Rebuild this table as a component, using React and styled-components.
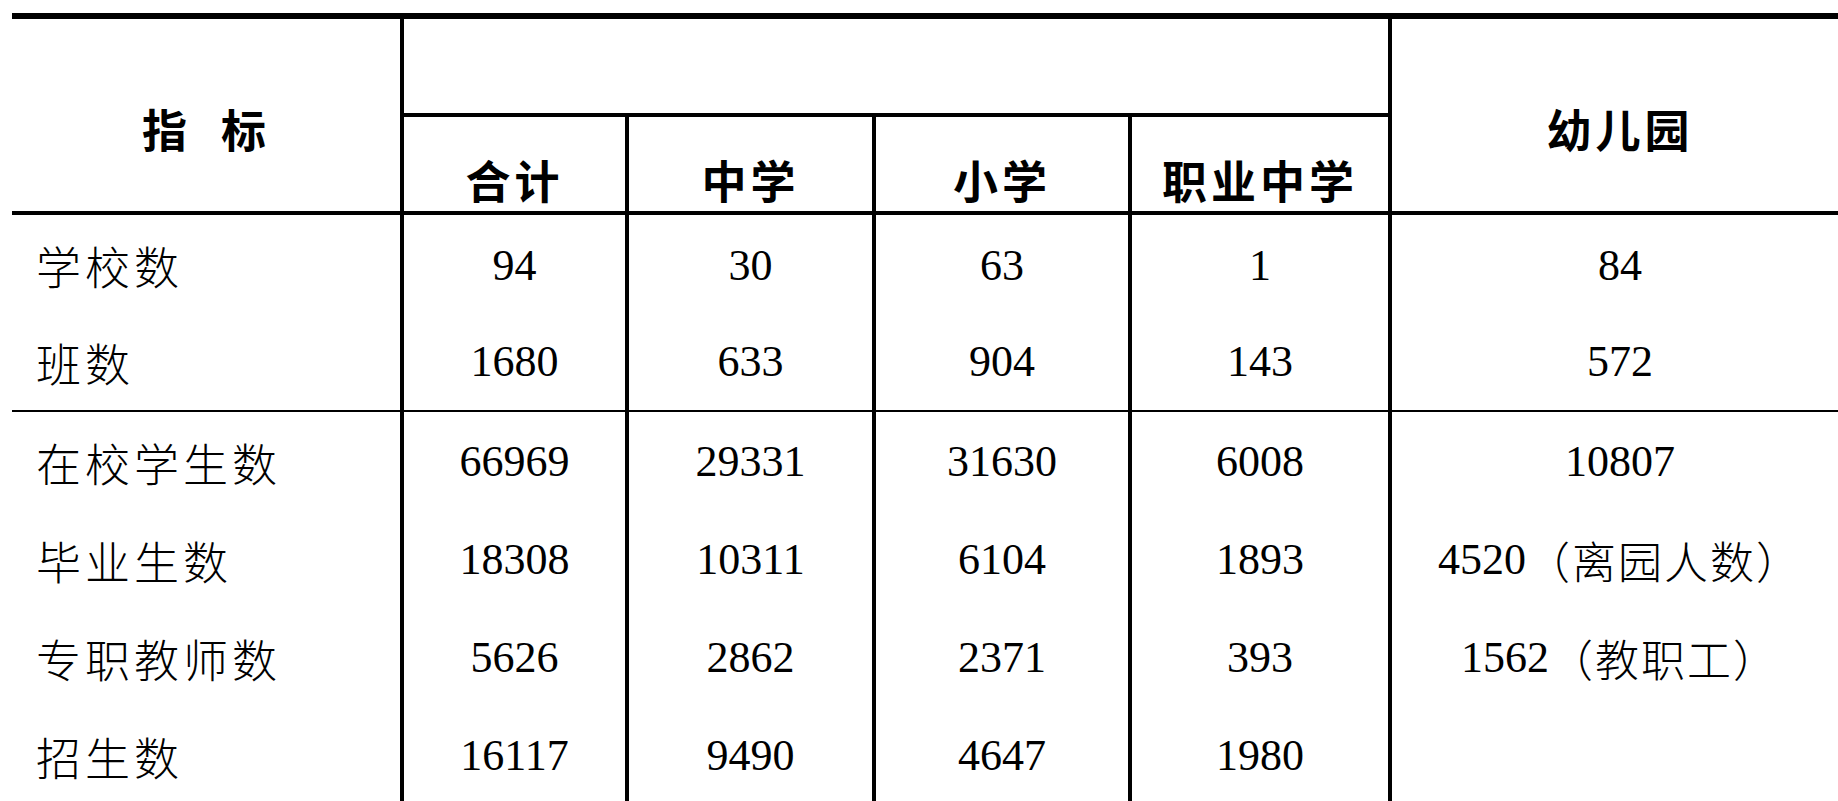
import React from 'react';
import styled, { createGlobalStyle } from 'styled-components';

const Global = createGlobalStyle`
  html, body { margin: 0; padding: 0; background: #fff; overflow: hidden; }
  body { font-family: "Liberation Serif", "Noto Sans CJK SC", serif; color: #000; }
`;

const Page = styled.div`
  box-sizing: border-box;
  width: 1838px;
  height: 801px;
  padding: 13px 0 0 12px;
  overflow: hidden;
`;

const Grid = styled.div`
  display: grid;
  grid-template-columns: 388px 225px 247px 256px 260px 460px;
  grid-template-rows: 98px 98px 97px 100px 98px 98px 98px 98px;
  border-top: 6px solid #000;
  width: max-content;
`;

const Cell = styled.div`
  box-sizing: border-box;
  display: flex;
  align-items: center;
  justify-content: ${(p) => (p.$left ? 'flex-start' : 'center')};
  grid-row: span ${(p) => p.$rowSpan || 1};
  grid-column: span ${(p) => p.$colSpan || 1};
  border-left: ${(p) => (p.$first ? 'none' : '4px solid #000')};
  border-bottom: ${(p) => (p.$bottom ? `${p.$bottom}px solid #000` : 'none')};
  padding-left: ${(p) => (p.$left ? '24px' : '0')};
  padding-top: ${(p) => p.$shift || 0}px;
  white-space: nowrap;
`;

const HeadText = styled.span`
  font-family: "Noto Sans CJK SC", sans-serif;
  font-weight: 700;
  font-size: 45px;
  letter-spacing: 4px;
  word-spacing: 16px;
  line-height: 1;
`;

const Label = styled.span`
  font-family: "Noto Sans CJK SC", sans-serif;
  font-weight: 300;
  font-size: 45px;
  letter-spacing: 4px;
  line-height: 1;
`;

const Num = styled.span`
  font-family: "Liberation Serif", serif;
  font-size: 44px;
  line-height: 1;
`;

const Note = styled.span`
  font-family: "Noto Sans CJK SC", sans-serif;
  font-weight: 300;
  font-size: 44px;
  letter-spacing: 2px;
`;

const groups = [
  [
    ['学校数', '94', '30', '63', '1', ['84']],
    ['班数', '1680', '633', '904', '143', ['572']],
  ],
  [
    ['在校学生数', '66969', '29331', '31630', '6008', ['10807']],
    ['毕业生数', '18308', '10311', '6104', '1893', ['4520', '（离园人数）']],
    ['专职教师数', '5626', '2862', '2371', '393', ['1562', '（教职工）']],
    ['招生数', '16117', '9490', '4647', '1980', ['']],
  ],
];

export default function App() {
  return (
    <>
      <Global />
      <Page>
        <Grid>
          <Cell $first $rowSpan={2} $bottom={4} $shift={26}>
            <HeadText>指 标</HeadText>
          </Cell>
          <Cell $colSpan={4} $bottom={4} />
          <Cell $rowSpan={2} $bottom={4} $shift={26}>
            <HeadText>幼儿园</HeadText>
          </Cell>
          {['合计', '中学', '小学', '职业中学'].map((t) => (
            <Cell key={t} $bottom={4} $shift={30}>
              <HeadText>{t}</HeadText>
            </Cell>
          ))}
          {groups.map((rows, gi) =>
            rows.map((r, ri) => {
              const bottom = gi === 0 && ri === rows.length - 1 ? 2 : 0;
              const shift = gi === 0 ? (ri === 0 ? 4 : 2) : 2;
              return (
                <React.Fragment key={r[0]}>
                  <Cell $first $left $bottom={bottom} $shift={shift}>
                    <Label>{r[0]}</Label>
                  </Cell>
                  {r.slice(1, 5).map((v, i) => (
                    <Cell key={i} $bottom={bottom} $shift={shift}>
                      <Num>{v}</Num>
                    </Cell>
                  ))}
                  <Cell $bottom={bottom} $shift={shift}>
                    <Num>{r[5][0]}</Num>
                    {r[5][1] && <Note>{r[5][1]}</Note>}
                  </Cell>
                </React.Fragment>
              );
            })
          )}
        </Grid>
      </Page>
    </>
  );
}
